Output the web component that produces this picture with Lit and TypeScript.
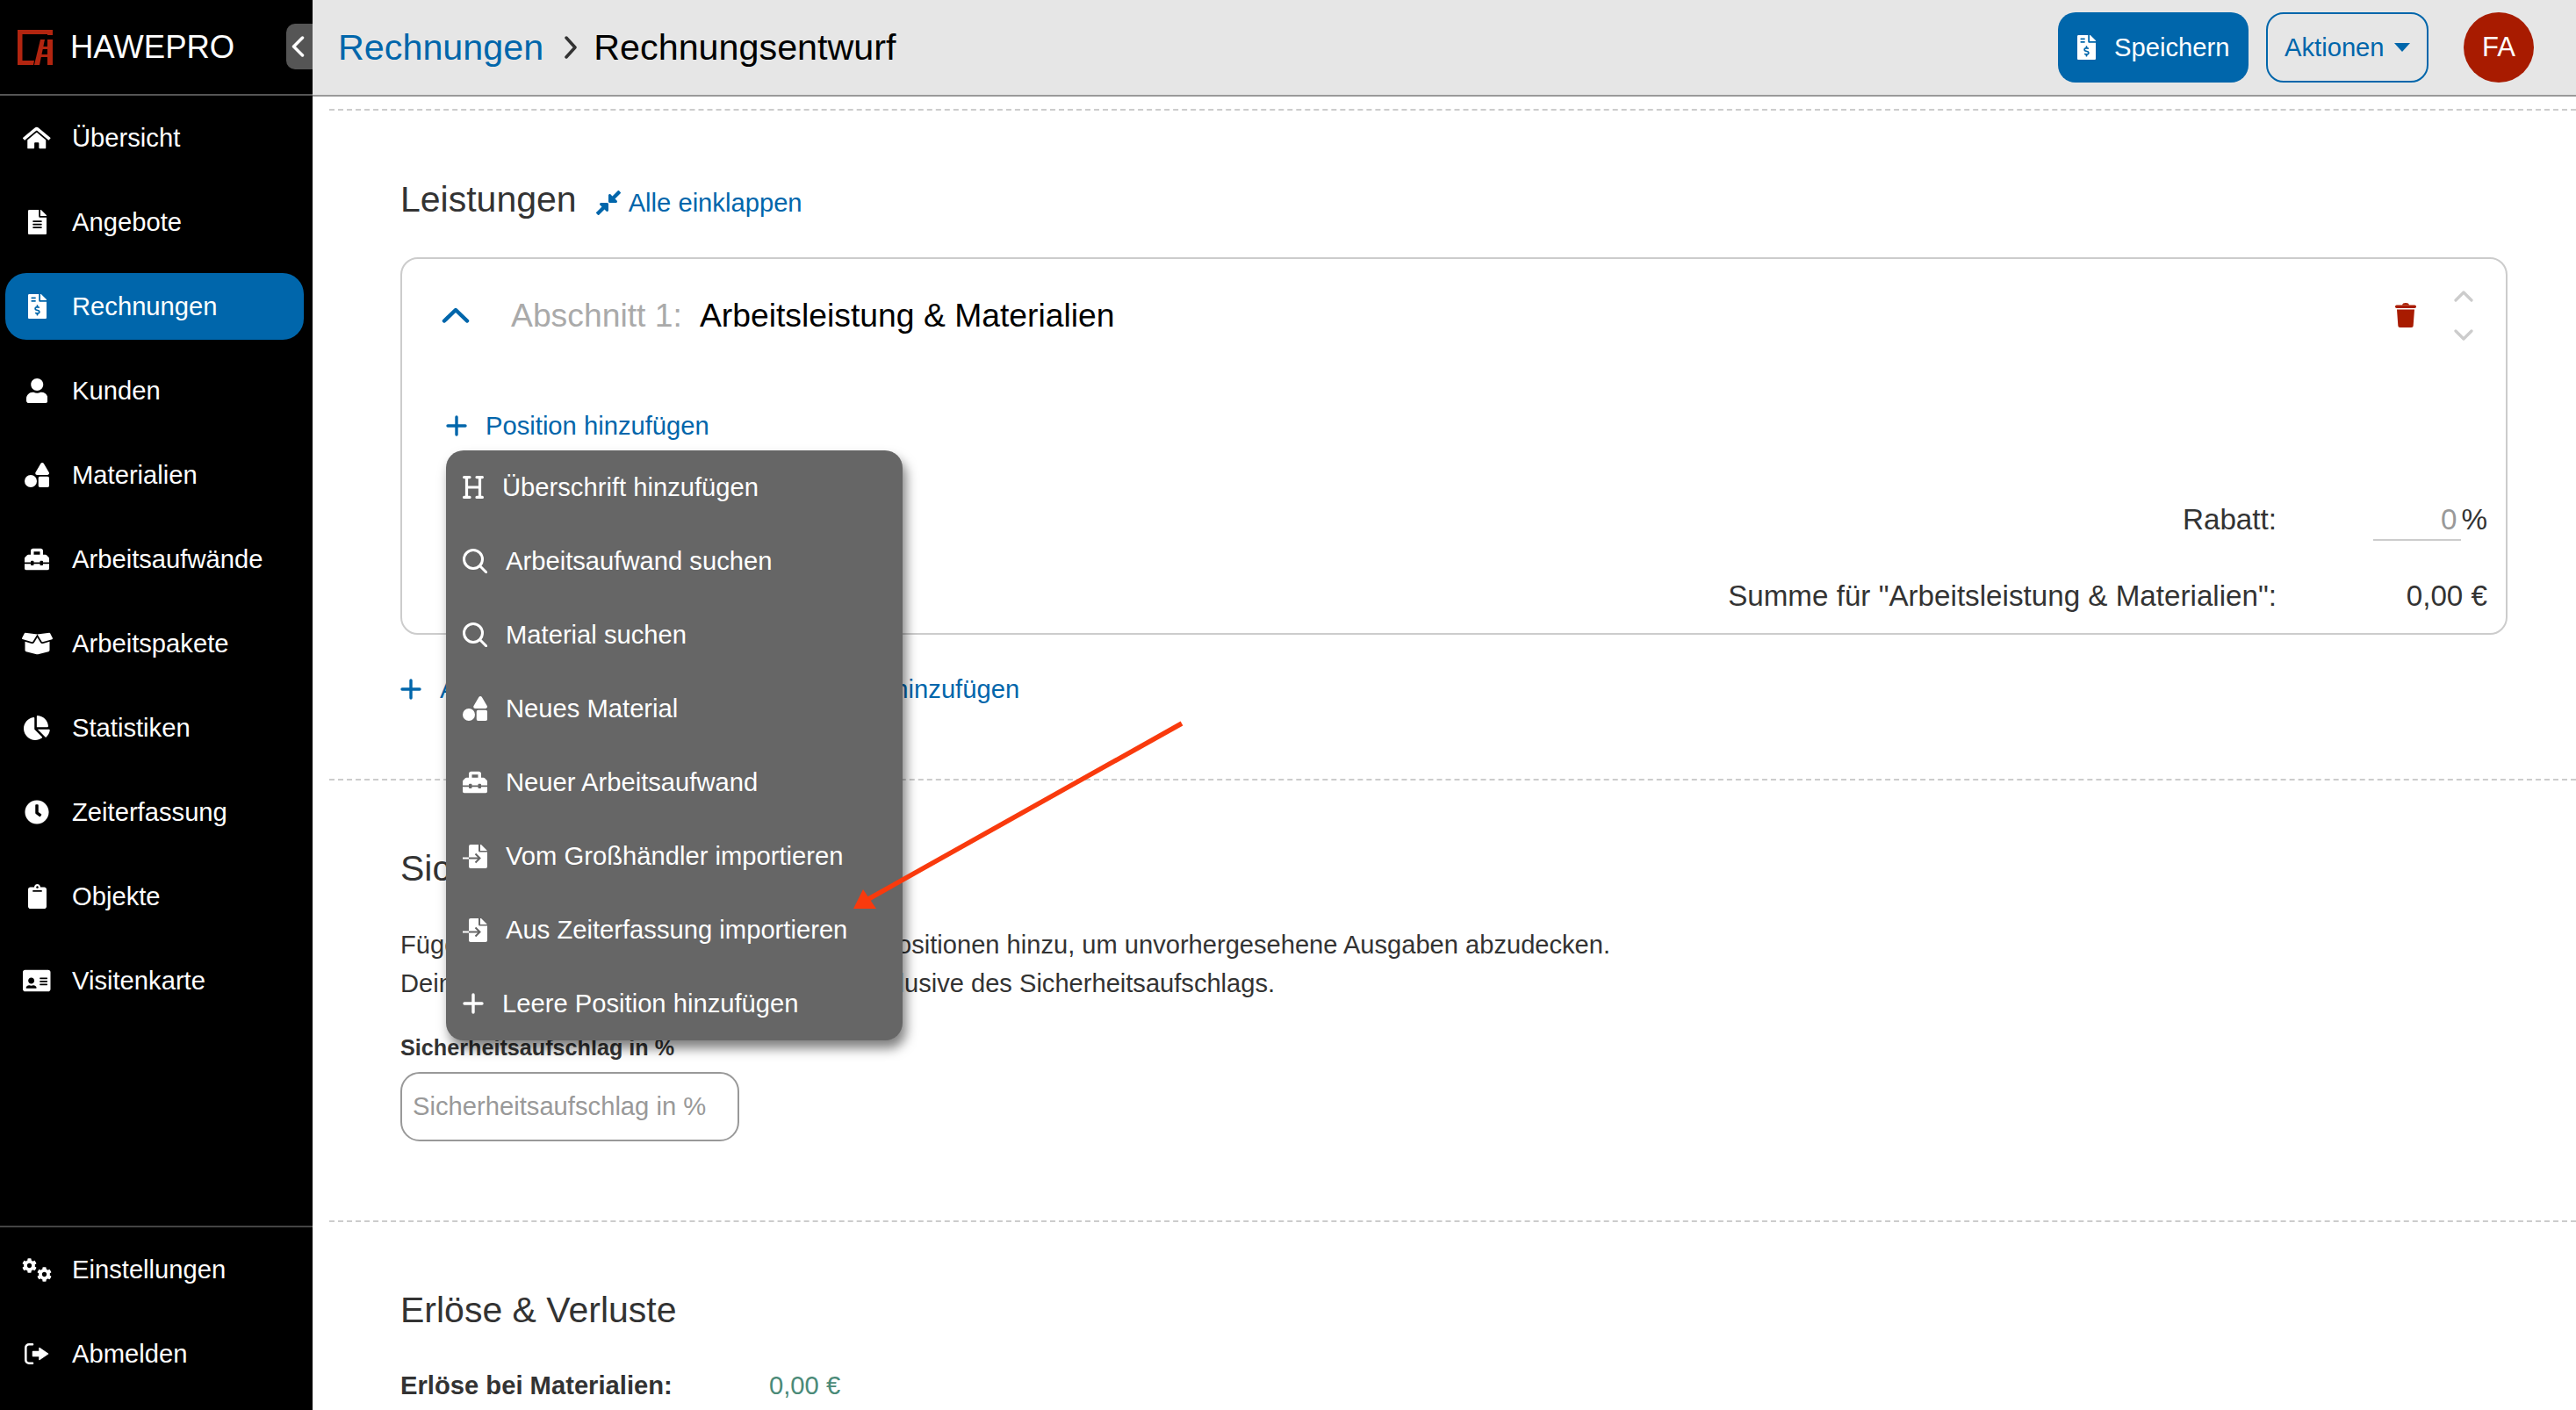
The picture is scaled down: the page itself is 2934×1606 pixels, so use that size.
import { LitElement, html, css } from "lit";
import { customElement } from "lit/decorators.js";

type Ic = { w: number; h: number; d: string };
const GEAR = "M487.4 315.7l-42.6-24.6c4.3-23.2 4.3-47 0-70.2l42.6-24.6c4.9-2.8 7.1-8.6 5.5-14-11.1-35.6-30-67.8-54.7-94.6-3.8-4.1-10-5.1-14.8-2.3L380.8 110c-17.9-15.4-38.5-27.3-60.8-35.1V25.8c0-5.6-3.9-10.5-9.4-11.7-36.7-8.2-74.3-7.8-109.2 0-5.5 1.2-9.4 6.1-9.4 11.7V75c-22.2 7.9-42.8 19.8-60.8 35.1L88.7 85.5c-4.9-2.8-11-1.9-14.8 2.3-24.7 26.7-43.6 58.9-54.7 94.6-1.7 5.4.6 11.2 5.5 14L67.3 221c-4.3 23.2-4.3 47 0 70.2l-42.6 24.6c-4.9 2.8-7.1 8.6-5.5 14 11.1 35.6 30 67.8 54.7 94.6 3.8 4.1 10 5.1 14.8 2.3l42.6-24.6c17.9 15.4 38.5 27.3 60.8 35.1v49.2c0 5.6 3.9 10.5 9.4 11.7 36.7 8.2 74.3 7.8 109.2 0 5.5-1.2 9.4-6.1 9.4-11.7v-49.2c22.2-7.9 42.8-19.8 60.8-35.1l42.6 24.6c4.9 2.8 11 1.9 14.8-2.3 24.7-26.7 43.6-58.9 54.7-94.6 1.5-5.5-.7-11.3-5.6-14.1zM256 336c-44.1 0-80-35.9-80-80s35.9-80 80-80 80 35.9 80 80-35.9 80-80 80z";
const I: Record<string, Ic> = {
  home: { w: 576, h: 512, d: "M280.37 148.26L96 300.11V464a16 16 0 0 0 16 16l112.06-.29a16 16 0 0 0 15.92-16V368a16 16 0 0 1 16-16h64a16 16 0 0 1 16 16v95.64a16 16 0 0 0 16 16.05L464 480a16 16 0 0 0 16-16V300L295.67 148.26a12.19 12.19 0 0 0-15.3 0zM571.6 251.47L318.47 43a48 48 0 0 0-61 0L4.34 251.47a12 12 0 0 0-1.6 16.9l25.5 31A12 12 0 0 0 45.15 301l235.22-193.74a12.19 12.19 0 0 1 15.3 0L530.9 301a12 12 0 0 0 16.9-1.6l25.5-31a12 12 0 0 0-1.7-16.93z" },
  file: { w: 384, h: 512, d: "M224 136V0H24C10.7 0 0 10.7 0 24v464c0 13.3 10.7 24 24 24h336c13.3 0 24-10.7 24-24V160H248c-13.2 0-24-10.8-24-24zm64 236c0 6.6-5.4 12-12 12H108c-6.6 0-12-5.4-12-12v-8c0-6.6 5.4-12 12-12h168c6.6 0 12 5.4 12 12v8zm0-64c0 6.6-5.4 12-12 12H108c-6.6 0-12-5.4-12-12v-8c0-6.6 5.4-12 12-12h168c6.6 0 12 5.4 12 12v8zm0-72v8c0 6.6-5.4 12-12 12H108c-6.6 0-12-5.4-12-12v-8c0-6.6 5.4-12 12-12h168c6.6 0 12 5.4 12 12zm96-114.1v6.1H256V0h6.1c6.4 0 12.5 2.5 17 7l97.9 98c4.5 4.5 7 10.6 7 16.9z" },
  invoice: { w: 384, h: 512, d: "M377 105L279.1 7c-4.5-4.5-10.6-7-17-7H256v128h128v-6.1c0-6.3-2.5-12.4-7-16.9zm-153 31V0H24C10.7 0 0 10.7 0 24v464c0 13.3 10.7 24 24 24h336c13.3 0 24-10.7 24-24V160H248c-13.2 0-24-10.8-24-24zM64 72c0-4.42 3.58-8 8-8h80c4.42 0 8 3.58 8 8v16c0 4.42-3.58 8-8 8H72c-4.42 0-8-3.58-8-8V72zm0 80v-16c0-4.42 3.58-8 8-8h80c4.42 0 8 3.58 8 8v16c0 4.42-3.58 8-8 8H72c-4.42 0-8-3.58-8-8zm144 263.88V440c0 4.42-3.58 8-8 8h-16c-4.42 0-8-3.58-8-8v-24.29c-11.29-.58-22.27-4.52-31.37-11.35-3.9-2.93-4.1-8.77-.57-12.14l11.75-11.21c2.77-2.64 6.89-2.76 10.13-.73 3.87 2.42 8.26 3.72 12.82 3.72h28.11c6.5 0 11.8-5.92 11.8-13.19 0-5.95-3.61-11.19-8.77-12.73l-45-13.5c-18.59-5.58-31.58-23.42-31.58-43.39 0-24.52 19.05-44.44 42.67-45.07V232c0-4.42 3.58-8 8-8h16c4.42 0 8 3.58 8 8v24.29c11.29.58 22.27 4.51 31.37 11.35 3.9 2.93 4.1 8.77.57 12.14l-11.75 11.21c-2.77 2.64-6.89 2.76-10.13.73-3.87-2.43-8.26-3.72-12.82-3.72h-28.11c-6.5 0-11.8 5.92-11.8 13.19 0 5.95 3.61 11.19 8.77 12.73l45 13.5c18.59 5.58 31.58 23.42 31.58 43.39 0 24.53-19.05 44.44-42.67 45.07z" },
  user: { w: 448, h: 512, d: "M224 256c70.7 0 128-57.3 128-128S294.7 0 224 0 96 57.3 96 128s57.3 128 128 128zm89.6 32h-16.7c-22.2 10.2-46.9 16-72.9 16s-50.6-5.8-72.9-16h-16.7C60.2 288 0 348.2 0 422.4V464c0 26.5 21.5 48 48 48h352c26.5 0 48-21.5 48-48v-41.6c0-74.2-60.2-134.4-134.4-134.4z" },
  shapes: { w: 512, h: 512, d: "M128,256A128,128,0,1,0,256,384,128,128,0,0,0,128,256Zm379-54.86L400.07,18.29a37.26,37.26,0,0,0-64.14,0L229,201.14C214.76,225.52,232.58,256,261.09,256H474.91C503.42,256,521.24,225.52,507,201.14ZM480,288H320a32,32,0,0,0-32,32V480a32,32,0,0,0,32,32H480a32,32,0,0,0,32-32V320A32,32,0,0,0,480,288Z" },
  toolbox: { w: 512, h: 512, d: "M502.63 214.63l-45.25-45.25c-6-6-14.14-9.37-22.63-9.37H384V80c0-26.51-21.49-48-48-48H176c-26.51 0-48 21.49-48 48v80H77.25c-8.49 0-16.62 3.37-22.63 9.37L9.37 214.63c-6 6-9.37 14.14-9.37 22.63V320h128v-16c0-8.84 7.16-16 16-16h32c8.84 0 16 7.16 16 16v16h128v-16c0-8.84 7.16-16 16-16h32c8.84 0 16 7.16 16 16v16h128v-82.75c0-8.48-3.37-16.62-9.37-22.62zM320 160H192V96h128v64zm64 208c0 8.84-7.16 16-16 16h-32c-8.84 0-16-7.16-16-16v-16H192v16c0 8.84-7.16 16-16 16h-32c-8.84 0-16-7.16-16-16v-16H0v96c0 17.67 14.33 32 32 32h448c17.67 0 32-14.33 32-32v-96H384v16z" },
  box: { w: 640, h: 512, d: "M425.7 256c-16.9 0-32.8-9-41.4-23.4L320 126l-64.2 106.6c-8.7 14.5-24.6 23.5-41.5 23.5-4.5 0-9-.6-13.3-1.9L64 215v178c0 14.7 10 27.5 24.2 31l216.2 54.1c10.2 2.5 20.9 2.5 31 0L551.8 424c14.2-3.6 24.2-16.4 24.2-31V215l-137 39.1c-4.3 1.3-8.8 1.9-13.3 1.9zm212.6-112.2L586.8 41c-3.1-6.2-9.8-9.8-16.7-8.9L320 64l91.7 152.1c3.8 6.3 11.4 9.3 18.5 7.3l197.9-56.5c9.9-2.9 14.7-13.9 10.2-23.1zM53.2 41L1.7 143.8c-4.6 9.2.3 20.2 10.1 23l197.9 56.5c7.1 2 14.7-1 18.5-7.3L320 64 69.8 32.1c-6.9-.8-13.5 2.7-16.6 8.9z" },
  pie: { w: 544, h: 512, d: "M527.79 288H290.5l158.03 158.03c6.04 6.04 15.98 6.53 22.19.68 38.7-36.46 65.32-85.61 73.13-140.86 1.34-9.46-6.51-17.85-16.06-17.85zm-15.83-64.8C503.72 103.74 408.26 8.28 288.8.04 279.68-.59 272 7.1 272 16.24V240h223.77c9.14 0 16.82-7.68 16.19-16.8zM224 288V50.71c0-9.55-8.39-17.4-17.84-16.06C86.99 51.49-4.1 155.6.14 280.37 4.5 408.51 114.83 513.59 243.03 511.98c50.4-.63 96.97-16.87 135.26-44.03 7.9-5.6 8.42-17.23 1.57-24.08L224 288z" },
  clock: { w: 512, h: 512, d: "M256,8C119,8,8,119,8,256S119,504,256,504,504,393,504,256,393,8,256,8Zm92.49,313h0l-20,25a16,16,0,0,1-22.49,2.5h0l-67-49.72a40,40,0,0,1-15-31.23V112a16,16,0,0,1,16-16h32a16,16,0,0,1,16,16V256l58,42.5A16,16,0,0,1,348.49,321Z" },
  clipboard: { w: 384, h: 512, d: "M384 112v352c0 26.51-21.49 48-48 48H48c-26.51 0-48-21.49-48-48V112c0-26.51 21.49-48 48-48h80c0-35.29 28.71-64 64-64s64 28.71 64 64h80c26.51 0 48 21.49 48 48zM192 40c-13.25 0-24 10.75-24 24s10.75 24 24 24 24-10.75 24-24-10.75-24-24-24m96 114v-20a6 6 0 0 0-6-6H102a6 6 0 0 0-6 6v20a6 6 0 0 0 6 6h180a6 6 0 0 0 6-6z" },
  idcard: { w: 576, h: 512, d: "M528 32H48C21.5 32 0 53.5 0 80v352c0 26.5 21.5 48 48 48h480c26.5 0 48-21.5 48-48V80c0-26.5-21.5-48-48-48zM352 200c0-4.4 3.6-8 8-8h144c4.4 0 8 3.6 8 8v16c0 4.4-3.6 8-8 8H360c-4.4 0-8-3.6-8-8v-16zm0 64c0-4.4 3.6-8 8-8h144c4.4 0 8 3.6 8 8v16c0 4.4-3.6 8-8 8H360c-4.4 0-8-3.6-8-8v-16zm0 64c0-4.4 3.6-8 8-8h144c4.4 0 8 3.6 8 8v16c0 4.4-3.6 8-8 8H360c-4.4 0-8-3.6-8-8v-16zM176 192c35.3 0 64 28.7 64 64s-28.7 64-64 64-64-28.7-64-64 28.7-64 64-64zM67.1 396.2C75.5 370.5 99.6 352 128 352h8.2c12.3 5.1 25.7 8 39.8 8s27.6-2.9 39.8-8h8.2c28.4 0 52.5 18.5 60.9 44.2 3.2 9.9-5.2 19.8-15.6 19.8H82.7c-10.4 0-18.8-10-15.6-19.8z" },
  compress: { w: 448, h: 512, d: "M4.686 427.314L104 328l-32.922-31.029C55.958 281.851 66.666 256 88.048 256h112C213.303 256 224 266.745 224 280v112c0 21.382-25.803 32.09-40.922 16.971L152 376l-99.314 99.314c-6.248 6.248-16.379 6.248-22.627 0L4.686 449.941c-6.248-6.248-6.248-16.379 0-22.627zM443.314 84.686L344 184l32.922 31.029c15.12 15.12 4.412 40.971-16.97 40.971h-112C234.697 256 224 245.255 224 232V120c0-21.382 25.803-32.09 40.922-16.971L296 136l99.314-99.314c6.248-6.248 16.379-6.248 22.627 0l25.373 25.373c6.248 6.248 6.248 16.379 0 22.627z" },
};

const icon = (k: string, h = 28) => {
  const i = I[k];
  return html`<svg width=${(i.w / i.h) * h} height=${h} viewBox="0 0 ${i.w} ${i.h}" fill="currentColor" fill-rule="evenodd"><path d=${i.d}></path></svg>`;
};

const plus = (s: number) => html`<svg width=${s} height=${s} viewBox="0 0 24 24" fill="none" stroke="currentColor" stroke-width="3.4" stroke-linecap="round"><path d="M12 2V22M2 12H22"></path></svg>`;
const search = html`<svg width="28" height="28" viewBox="0 0 28 28" fill="none" stroke="currentColor" stroke-width="3"><circle cx="12" cy="12" r="10.5"></circle><path d="M19.5 19.5L27 27" stroke-linecap="round"></path></svg>`;
const heading = html`<svg width="24" height="26" viewBox="0 0 24 26" fill="none" stroke="currentColor" stroke-width="3.2" stroke-linecap="round"><path d="M4.5 1.6V24.4M19.5 1.6V24.4M4.5 13H19.5M1.6 1.6H8M16 1.6H22.4M1.6 24.4H8M16 24.4H22.4"></path></svg>`;
const fileImport = html`<svg width="28" height="27" viewBox="0 0 28 27" fill="none"><path fill="#fff" d="M7 2a2 2 0 0 1 2-2h9v7a1.5 1.5 0 0 0 1.5 1.5H28V25a2 2 0 0 1-2 2H9a2 2 0 0 1-2-2Z"></path><path fill="#fff" d="M20 0h1l6.5 6.5V7H20Z"></path><path d="M7 15.5H19M14.5 10.5L19.5 15.5L14.5 20.5" stroke="#666" stroke-width="2"></path><path d="M0 15.5H7" stroke="#fff" stroke-width="2"></path></svg>`;
const cogs = html`<svg width="34" height="27" viewBox="0 0 34 27" fill="currentColor"><svg x="0" y="0" width="17" height="17" viewBox="0 0 512 512"><path d=${GEAR}></path></svg><svg x="17" y="10" width="17" height="17" viewBox="0 0 512 512"><path d=${GEAR}></path></svg></svg>`;
const signout = html`<svg width="28" height="24" viewBox="0 0 28 24"><path d="M9 1.3H5A3.7 3.7 0 0 0 1.3 5V19A3.7 3.7 0 0 0 5 22.7H9" fill="none" stroke="currentColor" stroke-width="2.6" stroke-linecap="round"></path><path d="M9.5 9.5H17V5.5L26.5 12L17 18.5V14.5H9.5Z" fill="currentColor" stroke="currentColor" stroke-width="1.5" stroke-linejoin="round"></path></svg>`;

const nav: [string, string][] = [
  ["home", "Übersicht"], ["file", "Angebote"], ["invoice", "Rechnungen"], ["user", "Kunden"],
  ["shapes", "Materialien"], ["toolbox", "Arbeitsaufwände"], ["box", "Arbeitspakete"], ["pie", "Statistiken"],
  ["clock", "Zeiterfassung"], ["clipboard", "Objekte"], ["idcard", "Visitenkarte"],
];

@customElement("app-root")
export class AppRoot extends LitElement {
  static styles = css`
    :host { display: block; position: relative; width: 2934px; height: 1606px; overflow: hidden; background: #fff;
      font-family: "Liberation Sans", Arial, sans-serif; font-size: 29.2px; color: #333; }
    * { box-sizing: border-box; }
    svg { display: block; flex: none; }
    .app { display: grid; grid-template-columns: 356px 1fr; height: 1606px; }
    .side { background: #000; color: #fff; display: flex; flex-direction: column; }
    .brand { height: 109px; flex: none; border-bottom: 2px solid #555; display: flex; align-items: center; padding-left: 20px; gap: 20px; font-size: 36.5px; }
    .toggle { margin-left: auto; width: 30px; height: 52px; background: #555; border-radius: 10px 0 0 10px; display: flex; align-items: center; justify-content: center; margin-top: -1px; padding-right: 3px; }
    .nav { display: flex; flex-direction: column; gap: 20px; padding: 10px 10px 0 6px; }
    .nav.bottom { margin-top: auto; border-top: 2px solid #444; padding-bottom: 26px; }
    .item { height: 76px; display: flex; align-items: center; gap: 20px; padding-left: 16px; border-radius: 24px; }
    .item.active { background: #0066ab; }
    .ibox { width: 40px; display: flex; justify-content: center; }
    .main { min-width: 0; display: flex; flex-direction: column; }
    .top { height: 110px; flex: none; background: #e6e6e6; border-bottom: 2px solid #999; display: flex; align-items: center; padding: 0 48px 0 29px; }
    .crumb { font-size: 41.3px; color: #000; display: flex; align-items: center; }
    .crumb a { color: #0066ab; }
    .crumb svg { margin: 0 19px 0 24px; }
    .acts { margin-left: auto; display: flex; align-items: center; }
    .btn { height: 80px; border-radius: 20px; display: flex; align-items: center; }
    .save { width: 217px; background: #0066ab; color: #fff; padding-left: 22px; gap: 21px; }
    .more { width: 185px; margin-left: 20px; border: 2px solid #0066ab; color: #0066ab; padding-left: 19px; gap: 11px; }
    .avatar { width: 80px; height: 80px; border-radius: 50%; background: #a81b00; color: #fff; margin-left: 40px; display: flex; align-items: center; justify-content: center; font-size: 31px; }
    .content { padding-left: 19px; padding-top: 14px; }
    .dash { border-top: 2px dashed #ccc; }
    .sec { padding: 0 78px 0 81px; }
    .s1 { padding-top: 78px; padding-bottom: 82px; }
    .s2 { padding-top: 77px; padding-bottom: 90px; }
    .s3 { padding-top: 77px; }
    h2 { margin: 0; font-size: 41px; font-weight: 400; line-height: 46px; color: #333; }
    .hrow { display: flex; align-items: center; gap: 22px; }
    .link { color: #0066ab; display: flex; align-items: center; }
    .collapse { gap: 9px; margin-top: 8px; }
    .cardwrap { position: relative; margin-top: 43px; }
    .card { height: 430px; border: 2px solid #ccc; border-radius: 20px; }
    .chead { height: 128px; display: flex; align-items: center; padding: 0 37px 0 45px; font-size: 37.3px; color: #000; }
    .chev { margin-right: 47px; }
    .muted { color: #aaa; margin-right: 20px; }
    .trash { margin-left: auto; margin-right: 43px; color: #a81b00; }
    .arrows { display: flex; flex-direction: column; gap: 31px; }
    .addpos { margin: 42px 0 0 50px; height: 40px; gap: 21px; }
    .sum { display: grid; grid-template-columns: 1fr 240px; padding-right: 21px; height: 44px; align-items: center; text-align: right; font-size: 33.2px; }
    .rabatt { margin-top: 63px; }
    .total { margin-top: 45px; }
    .pct { display: flex; justify-content: flex-end; align-items: center; }
    .pctin { width: 100px; height: 46px; line-height: 44px; padding-right: 5px; color: #999; border-bottom: 2px solid #ccc; margin-top: 2px; }
    .links { display: flex; margin-top: 42px; height: 40px; gap: 31px; }
    .links .link { gap: 21px; }
    .menu { position: absolute; left: 52px; top: 220px; width: 520px; height: 672px; background: #666; border-radius: 20px; box-shadow: 4px 9px 13px rgba(0,0,0,.5); color: #fff; }
    .mi { height: 84px; display: flex; align-items: center; padding-left: 19px; gap: 21px; }
    .p { margin: 42px 0 0; line-height: 44px; font-size: 29.1px; }
    .lbl { margin-top: 36px; font-size: 25.2px; font-weight: 700; line-height: 30px; }
    .inp { margin-top: 13px; width: 386px; height: 79px; border: 2px solid #999; border-radius: 22px; padding-left: 12px; display: flex; align-items: center; color: #999; }
    .row { margin-top: 43px; height: 40px; display: flex; align-items: center; }
    .row b { width: 420px; font-size: 29.2px; }
    .row span { color: #4a8a78; }
    .arrow { position: absolute; inset: 0; pointer-events: none; }
  `;

  render() {
    const item = (ic: unknown, t: string, active = false) => html`<div class="item ${active ? "active" : ""}"><span class="ibox">${ic}</span><span>${t}</span></div>`;
    const mi = (ic: unknown, t: string) => html`<div class="mi">${ic}<span>${t}</span></div>`;
    return html`
      <div class="app">
        <aside class="side">
          <div class="brand">
            <svg width="40" height="40" viewBox="0 0 40 40" fill="#b22510"><path d="M0 0H40V5H5.5V35H19L18 40H0Z"></path><path d="M26 11H31L25 40H19Z"></path><path d="M34 11H40V40H34Z"></path><rect x="34" y="0" width="6" height="6"></rect><rect x="27" y="19" width="8" height="3"></rect><rect x="25" y="28" width="10" height="3"></rect></svg>
            <span>HAWEPRO</span>
            <span class="toggle"><svg width="15" height="24" viewBox="0 0 15 24" fill="none" stroke="#fff" stroke-width="3.5" stroke-linecap="round" stroke-linejoin="round"><path d="M12.5 2L2.5 12L12.5 22"></path></svg></span>
          </div>
          <div class="nav">${nav.map(([k, t]) => item(icon(k), t, t === "Rechnungen"))}</div>
          <div class="nav bottom">${item(cogs, "Einstellungen")}${item(signout, "Abmelden")}</div>
        </aside>
        <main class="main">
          <header class="top">
            <div class="crumb"><a>Rechnungen</a><svg width="14" height="26" viewBox="0 0 14 26" fill="none" stroke="#333" stroke-width="3.5" stroke-linecap="round" stroke-linejoin="round"><path d="M2 2L12 13L2 24"></path></svg><span>Rechnungsentwurf</span></div>
            <div class="acts">
              <div class="btn save">${icon("invoice", 28)}<span>Speichern</span></div>
              <div class="btn more"><span>Aktionen</span><svg width="18" height="10" viewBox="0 0 18 10" fill="#0066ab"><path d="M0 0H18L9 10Z"></path></svg></div>
              <div class="avatar">FA</div>
            </div>
          </header>
          <div class="content">
            <div class="dash"></div>
            <section class="sec s1">
              <div class="hrow"><h2>Leistungen</h2><div class="link collapse">${icon("compress", 32)}<span>Alle einklappen</span></div></div>
              <div class="cardwrap">
                <div class="card">
                  <div class="chead">
                    <svg class="chev" width="32" height="18" viewBox="0 0 32 18" fill="none" stroke="#0066ab" stroke-width="4.5" stroke-linecap="round" stroke-linejoin="round"><path d="M3 15.5L16 3L29 15.5"></path></svg>
                    <span class="muted">Abschnitt 1:</span><span>Arbeitsleistung &amp; Materialien</span>
                    <svg class="trash" width="24" height="28" viewBox="0 0 24 28" fill="currentColor"><path d="M8 2.5C8 .8 10 0 12 0s4 .8 4 2.5Z"></path><rect x="0" y="2.5" width="24" height="3.5" rx="1.7"></rect><path d="M2 7.5H22L20.7 25.5A2.5 2.5 0 0 1 18.2 28H5.8A2.5 2.5 0 0 1 3.3 25.5Z"></path></svg>
                    <div class="arrows">
                      <svg width="22" height="13" viewBox="0 0 22 13" fill="none" stroke="#ccc" stroke-width="3.2" stroke-linecap="round" stroke-linejoin="round"><path d="M2 11L11 2L20 11"></path></svg>
                      <svg width="22" height="13" viewBox="0 0 22 13" fill="none" stroke="#ccc" stroke-width="3.2" stroke-linecap="round" stroke-linejoin="round"><path d="M2 2L11 11L20 2"></path></svg>
                    </div>
                  </div>
                  <div class="link addpos">${plus(24)}<span>Position hinzufügen</span></div>
                  <div class="sum rabatt"><span>Rabatt:</span><div class="pct"><div class="pctin">0</div><span>%</span></div></div>
                  <div class="sum total"><span>Summe für "Arbeitsleistung &amp; Materialien":</span><span>0,00 €</span></div>
                </div>
                <div class="menu">
                  ${mi(heading, "Überschrift hinzufügen")}
                  ${mi(search, "Arbeitsaufwand suchen")}
                  ${mi(search, "Material suchen")}
                  ${mi(icon("shapes"), "Neues Material")}
                  ${mi(icon("toolbox"), "Neuer Arbeitsaufwand")}
                  ${mi(fileImport, "Vom Großhändler importieren")}
                  ${mi(fileImport, "Aus Zeiterfassung importieren")}
                  ${mi(plus(24), "Leere Position hinzufügen")}
                </div>
              </div>
              <div class="links">
                <div class="link">${plus(24)}<span>Abschnitt hinzufügen</span></div>
                <div class="link">${plus(24)}<span>Arbeitspaket hinzufügen</span></div>
              </div>
            </section>
            <div class="dash"></div>
            <section class="sec s2">
              <h2>Sicherheitsaufschlag</h2>
              <p class="p">Füge dem Angebot zusätzliche Sicherheitspositionen hinzu, um unvorhergesehene Ausgaben abzudecken.<br>Deine Gesamtsumme versteht sich stets inklusive des Sicherheitsaufschlags.</p>
              <div class="lbl">Sicherheitsaufschlag in %</div>
              <div class="inp">Sicherheitsaufschlag in %</div>
            </section>
            <div class="dash"></div>
            <section class="sec s3">
              <h2>Erlöse &amp; Verluste</h2>
              <div class="row"><b>Erlöse bei Materialien:</b><span>0,00 €</span></div>
            </section>
          </div>
        </main>
      </div>
      <svg class="arrow" width="2934" height="1606" viewBox="0 0 2934 1606"><path d="M1346 824L982 1028" stroke="#f93a0d" stroke-width="5.5"></path><path d="M972 1035L983 1013L998 1035Z" fill="#f93a0d"></path></svg>
    `;
  }
}
